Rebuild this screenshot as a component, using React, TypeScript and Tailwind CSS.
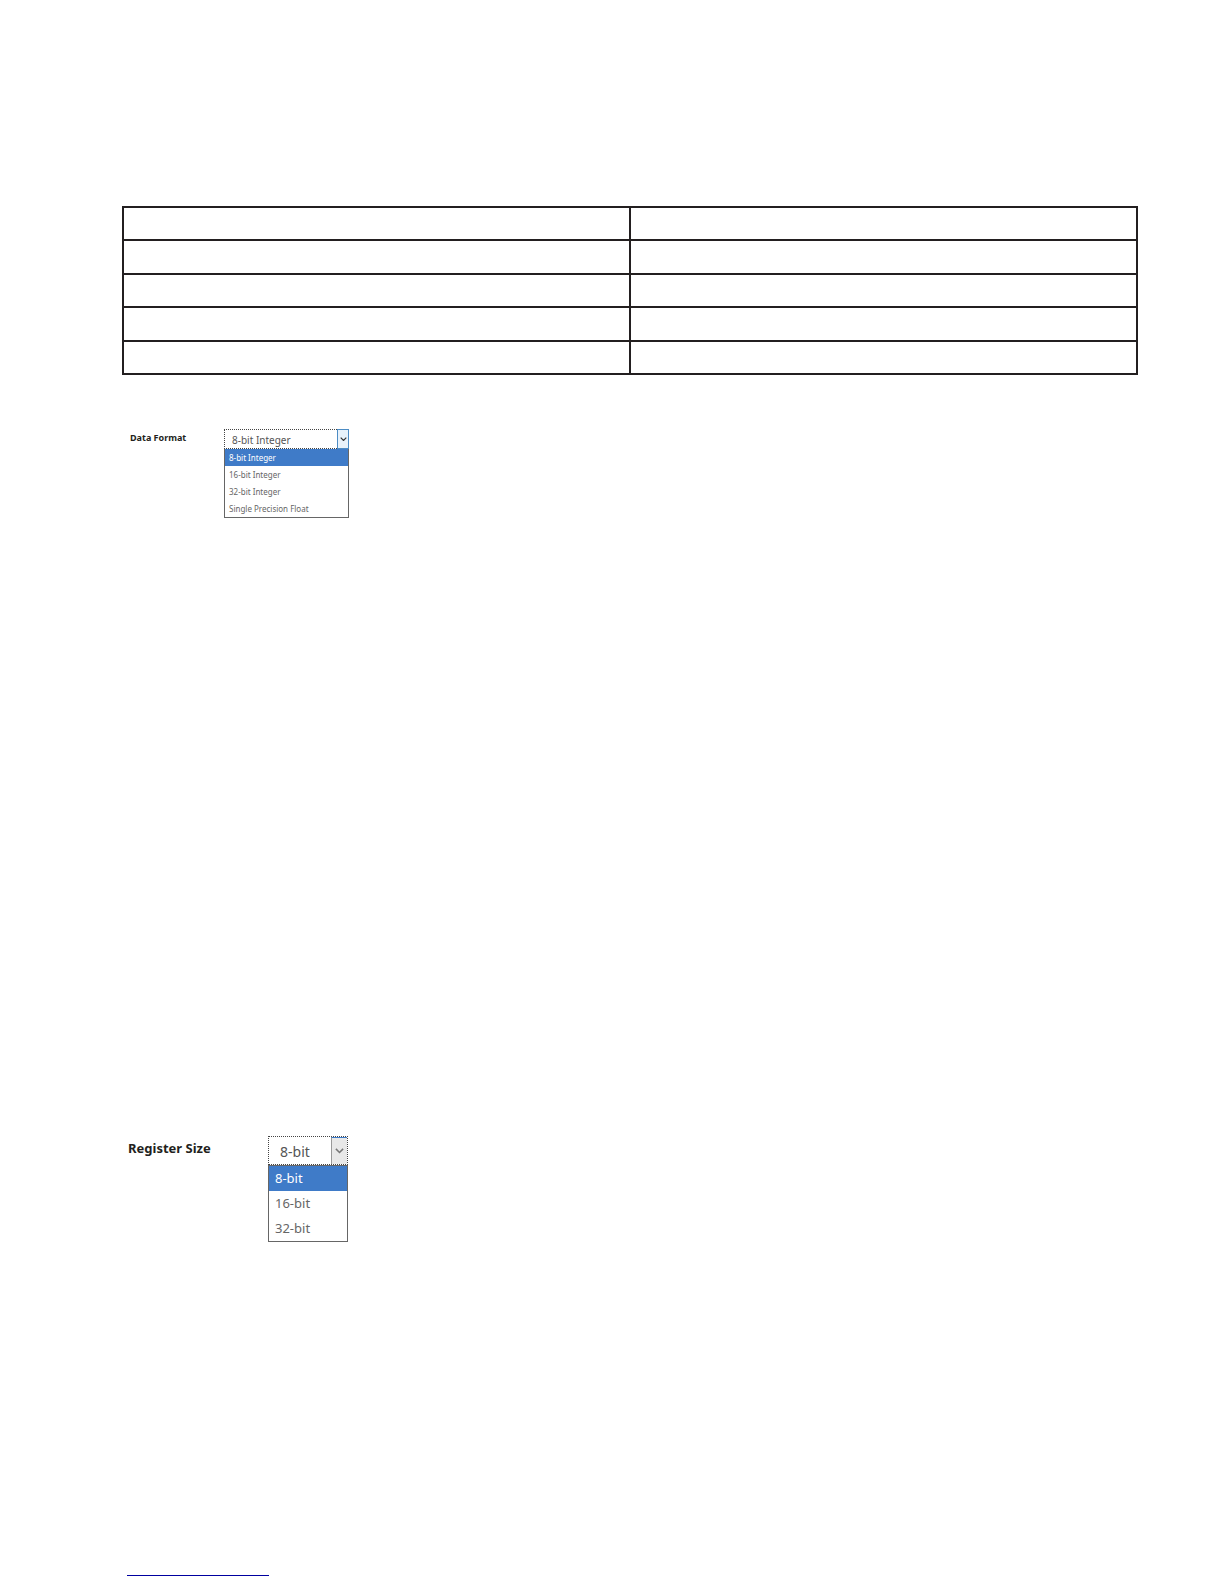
import React, { useState } from 'react';
import clsx from 'clsx';

const tableRows = ['row-1', 'row-2', 'row-3', 'row-4', 'row-5'];

const dataFormats = ['8-bit Integer', '16-bit Integer', '32-bit Integer', 'Single Precision Float'];
const registerSizes = ['8-bit', '16-bit', '32-bit'];

interface DropdownProps {
  id: string;
  label: string;
  options: string[];
  large?: boolean;
}

const Dropdown: React.FC<DropdownProps> = ({ id, label, options, large = false }) => {
  const [value, setValue] = useState(options[0]);

  return (
    <div className="flex items-start">
      <label
        htmlFor={id}
        className={clsx(
          'shrink-0 font-bold text-[#231f20]',
          large ? 'w-[140px] text-[13px] leading-6' : 'w-[96px] pl-0.5 text-[9px] leading-[17px]'
        )}
      >
        {label}
      </label>

      <div className={large ? 'w-[80px]' : 'w-[125px]'}>
        <div className={clsx('flex border border-dotted border-[#444]', large ? 'h-[29px]' : 'h-5')}>
          <select
            id={id}
            value={value}
            onChange={(e) => setValue(e.target.value)}
            className={clsx(
              'min-w-0 flex-1 appearance-none bg-white text-[#555] outline-none',
              large ? 'pl-[11px] pt-px text-[14px]' : 'pl-[7px] pt-0.5 text-[10px] leading-4'
            )}
          >
            {options.map((option) => (
              <option key={option}>{option}</option>
            ))}
          </select>
          <span
            className={clsx(
              'pointer-events-none flex items-center justify-center',
              large
                ? 'w-4 border-l border-t border-l-[#999] border-t-[#3d7bc8] bg-[#e8e8e8] text-[#777]'
                : '-my-px -mr-px w-3 border border-[#4d8cc4] bg-[#e8f2fb] text-[#333]'
            )}
          >
            <svg viewBox="0 0 10 6" className={large ? 'w-[9px]' : 'w-[7px]'} fill="none" stroke="currentColor" strokeWidth="1.7">
              <path d="M1 1l4 4 4-4" />
            </svg>
          </span>
        </div>

        <ul
          role="listbox"
          aria-label={label}
          className={clsx('border-x border-b border-[#666] bg-white text-[#666]', large && 'border-t')}
        >
          {options.map((option) => (
            <li
              key={option}
              role="option"
              aria-selected={option === value}
              onClick={() => setValue(option)}
              className={clsx(
                'cursor-default whitespace-nowrap',
                large ? 'h-[25px] pl-1.5 text-[13px] leading-[25px]' : 'h-[17px] pl-1 text-[8px] leading-[17px]',
                option === value && 'bg-[#3f7bc8] text-white'
              )}
            >
              {option}
            </li>
          ))}
        </ul>
      </div>
    </div>
  );
};

const App: React.FC = () => {
  return (
    <main className="flex min-h-screen flex-col bg-white pb-2 pl-[122px] pr-[86px] pt-[206px] font-['Noto_Sans',sans-serif]">
      <table className="w-full table-fixed border-collapse">
        <tbody>
          {tableRows.map((row) => (
            <tr key={row} className="h-[33px] even:h-[34px]">
              <td className="border-2 border-[#231f20] p-0"></td>
              <td className="border-2 border-[#231f20] p-0"></td>
            </tr>
          ))}
        </tbody>
      </table>

      <section className="pl-1.5 pt-[54px]">
        <Dropdown id="data-format" label="Data Format" options={dataFormats} />
      </section>

      <section className="pl-1.5 pt-[618px]">
        <Dropdown id="register-size" label="Register Size" options={registerSizes} large />
      </section>

      <footer className="mt-auto pl-[5px]">
        <a href="#top" aria-label="Back to top" className="block h-4 w-[142px] border-b border-[#0000a0]"></a>
      </footer>
    </main>
  );
};

export default App;
